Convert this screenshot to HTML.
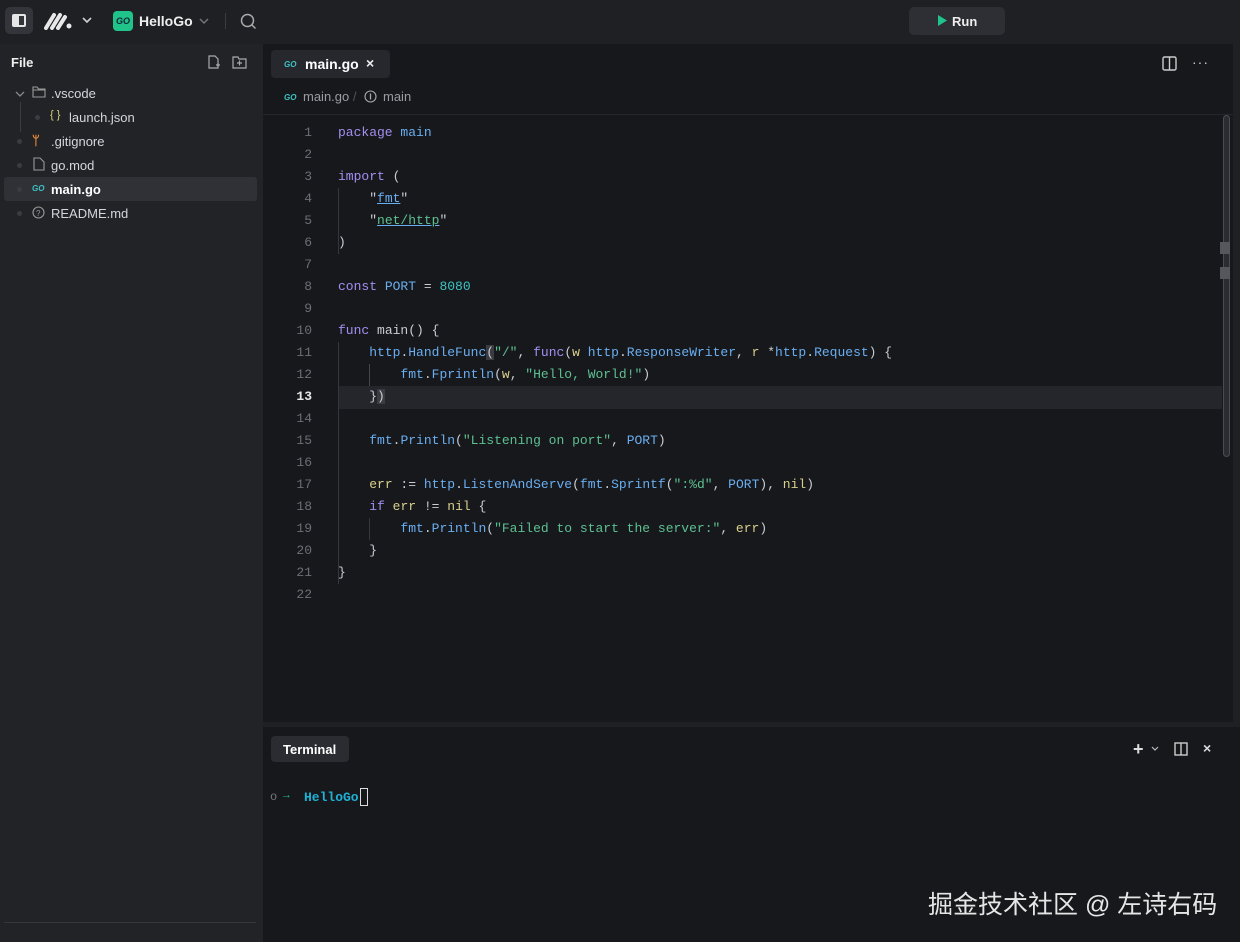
<!DOCTYPE html>
<html><head><meta charset="utf-8"><style>
*{box-sizing:border-box;margin:0;padding:0}
body{width:1240px;height:942px;background:#1f2024;font-family:"Liberation Sans",sans-serif;color:#d4d6dc;position:relative;overflow:hidden;font-size:13px}
.abs{position:absolute}
.mono{font-family:"Liberation Mono",monospace}
.code{position:absolute;left:338px;top:122px;font-size:13px;line-height:22px;white-space:pre;color:#c9ccd3}
.ln{position:absolute;left:280px;width:32px;top:122px;text-align:right;font-size:13px;line-height:22px;color:#6b6e76;white-space:pre}
.k{color:#a38ef0}.f{color:#6aaef0}.s{color:#5dc091}.n{color:#3cc4c4}.p{color:#d9cf8c}
.tree div{position:absolute;font-size:13px;color:#d4d6dc}
.dot{position:absolute;width:5px;height:5px;border-radius:50%;background:#3a3c42}
</style></head><body>
<!-- top bar -->
<div class="abs" style="left:5px;top:7px;width:28px;height:27px;background:#33353b;border-radius:5px"></div>
<div class="abs" style="left:12px;top:14px;width:14px;height:13px;border:2px solid #e6e6e6;border-radius:2px"><div style="width:5px;height:9px;background:#e6e6e6"></div></div>
<svg class="abs" style="left:44px;top:12px" width="30" height="18" viewBox="0 0 30 18"><path d="M2 16 L10 3 M8 16 L16 3 M14 16 L21 5" stroke="#e8e8e8" stroke-width="4" stroke-linecap="round"/><circle cx="25" cy="14" r="2.5" fill="#e8e8e8"/></svg>
<svg class="abs" style="left:82px;top:16px" width="10" height="8"><path d="M1 2 L5 6 L9 2" stroke="#cfcfcf" stroke-width="1.6" fill="none"/></svg>
<div class="abs" style="left:113px;top:11px;width:20px;height:20px;background:#20c38a;border-radius:4px;color:#123;font-size:9px;font-weight:bold;text-align:center;line-height:20px;font-style:italic">GO</div>
<div class="abs" style="left:139px;top:13px;font-weight:bold;font-size:14px;color:#eee">HelloGo</div>
<svg class="abs" style="left:199px;top:17px" width="10" height="8"><path d="M1 2 L5 6 L9 2" stroke="#777" stroke-width="1.4" fill="none"/></svg>
<div class="abs" style="left:225px;top:13px;width:1px;height:16px;background:#3a3c42"></div>
<svg class="abs" style="left:240px;top:13px" width="17" height="17"><circle cx="7.5" cy="7.5" r="6" stroke="#aaa" stroke-width="1.5" fill="none"/><path d="M12 12 L15.5 15.5" stroke="#aaa" stroke-width="1.5"/></svg>
<div class="abs" style="left:909px;top:7px;width:96px;height:28px;background:#2d2f35;border-radius:5px"></div>
<svg class="abs" style="left:938px;top:15px" width="9" height="11"><path d="M0 0 L9 5.5 L0 11Z" fill="#20c38a"/></svg>
<div class="abs" style="left:952px;top:14px;font-weight:bold;color:#eee">Run</div>
<!-- sidebar -->
<div class="abs" style="left:0;top:44px;width:263px;height:898px;background:#222327"></div>
<div class="abs" style="left:11px;top:55px;font-weight:bold;color:#f0f0f0">File</div>
<svg class="abs" style="left:207px;top:55px" width="40" height="15"><path d="M2 1 H8 L11 4 V13 H2Z" stroke="#aaa" stroke-width="1.2" fill="none"/><path d="M9 10 H13 M11 8 V12" stroke="#aaa" stroke-width="1.2"/><path d="M26 2 H31 L32 4 H39 V13 H26Z" stroke="#aaa" stroke-width="1.2" fill="none"/><path d="M30 8 H35 M32.5 5.5 V10.5" stroke="#aaa" stroke-width="1.2"/></svg>
<div class="abs" style="left:4px;top:177px;width:253px;height:24px;background:#2f3137;border-radius:3px"></div>
<div class="tree">
<svg class="abs" style="left:15px;top:90px" width="10" height="8"><path d="M1 2 L5 6 L9 2" stroke="#888" stroke-width="1.3" fill="none"/></svg>
<svg class="abs" style="left:32px;top:86px" width="14" height="12"><path d="M1 1 H5 L6.5 3 H13 V11 H1Z M1 4 H13" stroke="#999" stroke-width="1.1" fill="none"/></svg>
<div style="left:51px;top:86px">.vscode</div>
<div class="abs" style="left:20px;top:102px;width:1px;height:30px;background:#3a3c42"></div>
<div class="dot" style="left:35px;top:115px"></div>
<div style="left:50px;top:109px;color:#d9cf7a;font-size:11px">{ }</div>
<div style="left:69px;top:110px">launch.json</div>
<div class="dot" style="left:17px;top:139px"></div>
<div style="left:32px;top:133px;color:#e88a3a;font-weight:bold">ᛘ</div>
<div style="left:51px;top:134px">.gitignore</div>
<div class="dot" style="left:17px;top:163px"></div>
<svg class="abs" style="left:33px;top:157px" width="12" height="14"><path d="M1 1 H7 L11 5 V13 H1Z" stroke="#999" stroke-width="1.1" fill="none"/></svg>
<div style="left:51px;top:158px">go.mod</div>
<div class="dot" style="left:17px;top:187px"></div>
<div style="left:32px;top:184px;color:#3cc4c4;font-size:8px;font-weight:bold;font-style:italic">GO</div>
<div style="left:51px;top:182px;font-weight:bold;color:#fff">main.go</div>
<div class="dot" style="left:17px;top:211px"></div>
<svg class="abs" style="left:32px;top:206px" width="13" height="13"><circle cx="6.5" cy="6.5" r="5.5" stroke="#999" stroke-width="1.1" fill="none"/><text x="4" y="10" font-size="8" fill="#999" font-family="Liberation Sans">?</text></svg>
<div style="left:51px;top:206px">README.md</div>
</div>
<div class="abs" style="left:4px;top:922px;width:252px;height:1px;background:#34363b"></div>
<!-- editor -->
<div class="abs" style="left:263px;top:44px;width:970px;height:678px;background:#17181c"></div>
<div class="abs" style="left:271px;top:50px;width:119px;height:28px;background:#26282d;border-radius:4px"></div>
<div class="abs" style="left:284px;top:60px;color:#3cc4c4;font-size:8px;font-weight:bold;font-style:italic">GO</div>
<div class="abs" style="left:305px;top:56px;font-weight:bold;font-size:14px;color:#fff">main.go</div>
<div class="abs" style="left:366px;top:55px;font-weight:bold;color:#eee;font-size:14px">×</div>
<svg class="abs" style="left:1162px;top:56px" width="15" height="15"><rect x="1" y="1" width="13" height="13" rx="1.5" stroke="#ccc" stroke-width="1.4" fill="none"/><path d="M7.5 1 V14" stroke="#ccc" stroke-width="1.4"/></svg>
<div class="abs" style="left:1192px;top:54px;color:#ccc;font-size:14px;letter-spacing:1px">···</div>
<div class="abs" style="left:284px;top:93px;color:#3cc4c4;font-size:8px;font-weight:bold;font-style:italic">GO</div>
<div class="abs" style="left:303px;top:89px;color:#9a9ca2">main.go <span style="color:#555">/</span></div>
<svg class="abs" style="left:364px;top:90px" width="13" height="13"><circle cx="6.5" cy="6.5" r="5.5" stroke="#aaa" stroke-width="1.1" fill="none"/><path d="M6.5 3.5 V9.5" stroke="#aaa" stroke-width="1.3"/></svg>
<div class="abs" style="left:383px;top:89px;color:#9a9ca2">main</div>
<div class="abs" style="left:263px;top:114px;width:970px;height:1px;background:#24262b"></div>
<div class="abs" style="left:338px;top:386px;width:884px;height:23px;background:#24262b"></div>
<div class="abs" style="left:338px;top:188px;width:1px;height:66px;background:#35373c"></div>
<div class="abs" style="left:338px;top:342px;width:1px;height:242px;background:#35373c"></div>
<div class="abs" style="left:369px;top:364px;width:1px;height:22px;background:#45474c"></div>
<div class="abs" style="left:369px;top:518px;width:1px;height:22px;background:#35373c"></div>
<div class="ln mono">1
2
3
4
5
6
7
8
9
10
11
12
<span style="color:#e8e8e8;font-weight:bold">13</span>
14
15
16
17
18
19
20
21
22</div>
<div class="code mono"><span class="k">package</span> <span class="f">main</span>

<span class="k">import</span> (
    "<span class="f" style="text-decoration:underline">fmt</span>"
    "<span class="s" style="text-decoration:underline;text-decoration-color:#6aaef0">net/http</span>"
)

<span class="k">const</span> <span class="f">PORT</span> = <span class="n">8080</span>

<span class="k">func</span> main() {
    <span class="f">http</span>.<span class="f">HandleFunc</span><span style="background:#3a3c42">(</span><span class="s">"/"</span>, <span class="k">func</span>(<span class="p">w</span> <span class="f">http</span>.<span class="f">ResponseWriter</span>, <span class="p">r</span> *<span class="f">http</span>.<span class="f">Request</span>) {
        <span class="f">fmt</span>.<span class="f">Fprintln</span>(<span class="p">w</span>, <span class="s">"Hello, World!"</span>)
    }<span style="background:#3a3c42">)</span>

    <span class="f">fmt</span>.<span class="f">Println</span>(<span class="s">"Listening on port"</span>, <span class="f">PORT</span>)

    <span class="p">err</span> := <span class="f">http</span>.<span class="f">ListenAndServe</span>(<span class="f">fmt</span>.<span class="f">Sprintf</span>(<span class="s">":%d"</span>, <span class="f">PORT</span>), <span class="p">nil</span>)
    <span class="k">if</span> <span class="p">err</span> != <span class="p">nil</span> {
        <span class="f">fmt</span>.<span class="f">Println</span>(<span class="s">"Failed to start the server:"</span>, <span class="p">err</span>)
    }
}
</div>
<div class="abs" style="left:1223px;top:115px;width:7px;height:342px;border:1px solid #4a4c52;border-radius:4px;background:#2a2c31"></div>
<div class="abs" style="left:1220px;top:242px;width:10px;height:12px;background:#55575c"></div>
<div class="abs" style="left:1220px;top:267px;width:10px;height:12px;background:#55575c"></div>
<!-- terminal -->
<div class="abs" style="left:263px;top:727px;width:977px;height:215px;background:#17181c"></div>
<div class="abs" style="left:271px;top:736px;width:78px;height:26px;background:#2a2c31;border-radius:4px"></div>
<div class="abs" style="left:283px;top:742px;font-weight:bold;color:#fff">Terminal</div>
<div class="abs" style="left:1133px;top:739px;color:#ddd;font-size:18px;font-weight:bold">+</div>
<svg class="abs" style="left:1151px;top:746px" width="8" height="6"><path d="M1 1 L4 4 L7 1" stroke="#bbb" stroke-width="1.2" fill="none"/></svg>
<svg class="abs" style="left:1174px;top:742px" width="14" height="14"><rect x="1" y="1" width="12" height="12" stroke="#ccc" stroke-width="1.4" fill="none"/><path d="M7 1 V13" stroke="#ccc" stroke-width="1.4"/></svg>
<div class="abs" style="left:1203px;top:740px;color:#ddd;font-weight:bold;font-size:14px">×</div>
<div class="abs mono" style="left:270px;top:790px;font-size:12px;color:#777">o</div>
<div class="abs mono" style="left:283px;top:790px;font-size:11px;color:#20c38a">→</div>
<div class="abs mono" style="left:304px;top:790px;font-size:13px;color:#1fb0d6;font-weight:bold">HelloGo</div>
<div class="abs" style="left:360px;top:788px;width:8px;height:18px;border:1px solid #ddd"></div>
<div class="abs" style="left:928px;top:885px;font-size:25px;color:#e6e6e6;font-family:'Liberation Sans','Noto Sans CJK SC',sans-serif">掘金技术社区 @ 左诗右码</div>
</body></html>
